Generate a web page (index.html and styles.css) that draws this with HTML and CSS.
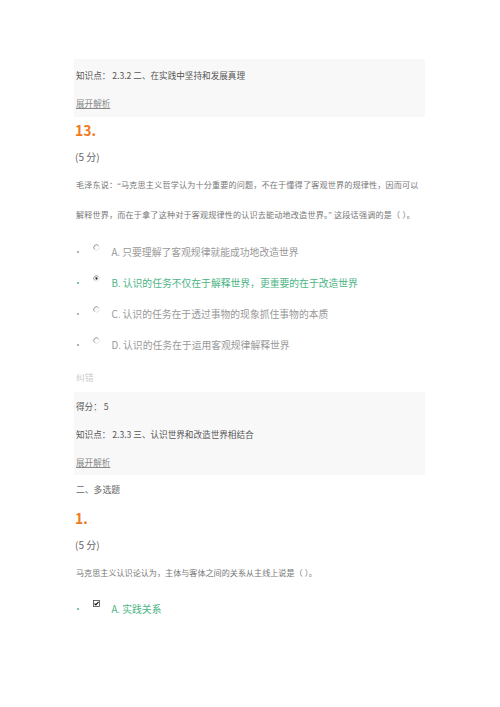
FILE: index.html
```html
<!DOCTYPE html>
<html lang="zh">
<head>
<meta charset="utf-8">
<link rel="stylesheet" href="styles.css">
</head>
<body>
<div class="page">
  <div class="panel p1">
    <div class="row meta">知识点： 2.3.2 二、在实践中坚持和发展真理</div>
    <div class="row"><a class="expand">展开解析</a></div>
  </div>
  <div class="qnum">13.</div>
  <div class="score">(5 分)</div>
  <div class="qtext"><span class="line">毛泽东说：“马克思主义哲学认为十分重要的问题，不在于懂得了客观世界的规律性，因而可以</span><span class="line">解释世界，而在于拿了这种对于客观规律性的认识去能动地改造世界。” 这段话强调的是（ ）。</span></div>
  <ul class="opts">
    <li class="opt"><span class="dot"></span><svg class="radio" viewBox="0 0 8 8"><path d="M6.2 1.8A3.1 3.1 0 1 0 1.8 6.2" fill="none" stroke="#777" stroke-width="0.9"/><path d="M6.2 1.8A3.1 3.1 0 0 1 1.8 6.2" fill="none" stroke="#ddd" stroke-width="0.9"/></svg><span class="otext">A. 只要理解了客观规律就能成功地改造世界</span></li>
    <li class="opt sel"><span class="dot"></span><svg class="radio" viewBox="0 0 8 8"><path d="M6.2 1.8A3.1 3.1 0 1 0 1.8 6.2" fill="none" stroke="#777" stroke-width="0.9"/><path d="M6.2 1.8A3.1 3.1 0 0 1 1.8 6.2" fill="none" stroke="#ddd" stroke-width="0.9"/><circle cx="4" cy="4" r="1.3" fill="#222"/></svg><span class="otext">B. 认识的任务不仅在于解释世界，更重要的在于改造世界</span></li>
    <li class="opt"><span class="dot"></span><svg class="radio" viewBox="0 0 8 8"><path d="M6.2 1.8A3.1 3.1 0 1 0 1.8 6.2" fill="none" stroke="#777" stroke-width="0.9"/><path d="M6.2 1.8A3.1 3.1 0 0 1 1.8 6.2" fill="none" stroke="#ddd" stroke-width="0.9"/></svg><span class="otext">C. 认识的任务在于透过事物的现象抓住事物的本质</span></li>
    <li class="opt"><span class="dot"></span><svg class="radio" viewBox="0 0 8 8"><path d="M6.2 1.8A3.1 3.1 0 1 0 1.8 6.2" fill="none" stroke="#777" stroke-width="0.9"/><path d="M6.2 1.8A3.1 3.1 0 0 1 1.8 6.2" fill="none" stroke="#ddd" stroke-width="0.9"/></svg><span class="otext">D. 认识的任务在于运用客观规律解释世界</span></li>
  </ul>
  <div class="fix">纠错</div>
  <div class="panel p2">
    <div class="row meta">得分： 5</div>
    <div class="row meta">知识点： 2.3.3 三、认识世界和改造世界相结合</div>
    <div class="row"><a class="expand">展开解析</a></div>
  </div>
  <div class="section">二、多选题</div>
  <div class="qnum">1.</div>
  <div class="score">(5 分)</div>
  <div class="qtext single">马克思主义认识论认为，主体与客体之间的关系从主线上说是（ ）。</div>
  <ul class="opts opts2">
    <li class="opt sel"><span class="dot"></span><svg class="check" viewBox="0 0 8 8"><rect x="0.5" y="0.5" width="7" height="7" fill="#fff" stroke="#444" stroke-width="0.9"/><path d="M1.8 4l1.5 1.6 3-3.4" fill="none" stroke="#111" stroke-width="1.3"/></svg><span class="otext">A. 实践关系</span></li>
  </ul>
</div>
</body>
</html>
```

FILE: styles.css
```css
html, body {
  margin: 0;
  padding: 0;
  background: #fff;
}
body {
  font-family: "Noto Sans CJK SC", "Noto Sans", sans-serif;
  color: #555;
}
.page {
  width: 351px;
  margin-left: 74px;
  padding-top: 59px;
}
.panel {
  background: #f8f8f8;
  padding: 2px 0 0 2px;
}
.p2 {
  padding-top: 0;
  height: 83px;
  box-sizing: border-box;
}
.row {
  height: 28px;
  line-height: 28px;
  font-size: 8.6px;
  white-space: nowrap;
}
.meta {
  color: #555;
}
.expand {
  color: #888;
  text-decoration: underline;
  text-underline-offset: 1px;
}
.qnum {
  height: 26px;
  line-height: 26px;
  font-size: 14px;
  font-weight: bold;
  color: #f07a1e;
  padding-left: 1px;
}
.score {
  height: 28px;
  line-height: 28px;
  font-size: 10px;
  color: #666;
  padding-left: 1px;
}
.qtext {
  line-height: 30px;
  font-size: 8.1px;
  color: #777;
  font-family: "Liberation Serif", "Noto Sans CJK SC", serif;
  padding-left: 2px;
  white-space: nowrap;
}
.line {
  display: block;
  letter-spacing: 0.17px;
}
.opts {
  list-style: none;
  margin: 6px 0 0;
  padding: 0;
}
.opt {
  display: flex;
  align-items: flex-start;
  height: 31px;
  line-height: 31px;
  font-size: 9.8px;
  color: #999;
  white-space: nowrap;
}
.opt.sel {
  color: #4cb486;
}
.dot {
  width: 2.4px;
  height: 2.4px;
  border-radius: 50%;
  background: #999;
  margin: 14px 0 0 3px;
  flex: none;
}
.sel .dot {
  background: #4cb486;
}
.radio, .check {
  width: 7px;
  height: 7px;
  margin: 7px 0 0 14px;
  flex: none;
}
.check {
  margin-top: 6px;
}
.otext {
  margin-left: 11px;
}
.fix {
  height: 31px;
  line-height: 34px;
  font-size: 8.8px;
  color: #ccc;
  padding-left: 2px;
}
.section {
  height: 30px;
  line-height: 30px;
  font-size: 8.8px;
  color: #666;
  padding-left: 2px;
}
.single {
  height: 30px;
}
.opts2 {
  margin-top: 5px;
}
```
